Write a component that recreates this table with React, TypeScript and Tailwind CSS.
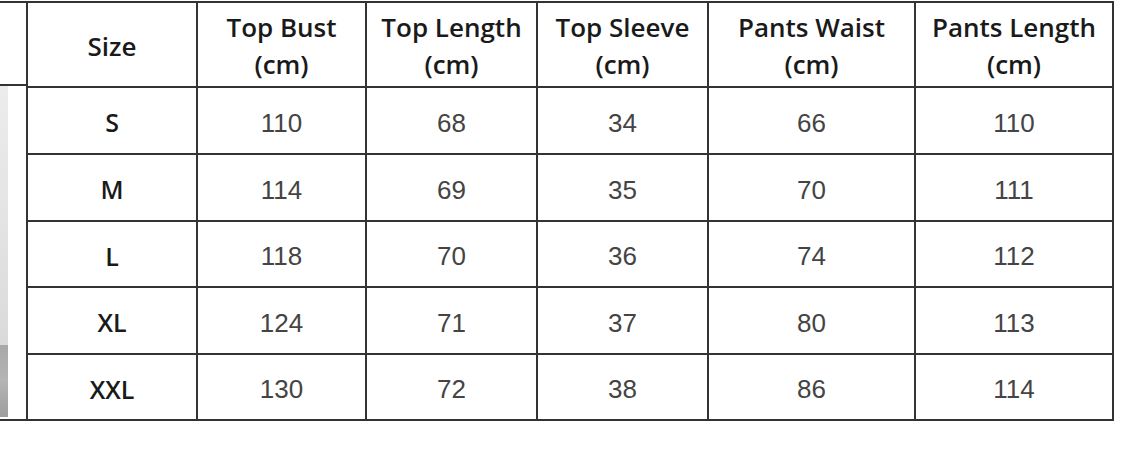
const headers = [
  { top: 'Size', bottom: '' },
  { top: 'Top Bust', bottom: '(cm)' },
  { top: 'Top Length', bottom: '(cm)' },
  { top: 'Top Sleeve', bottom: '(cm)' },
  { top: 'Pants Waist', bottom: '(cm)' },
  { top: 'Pants Length', bottom: '(cm)' },
];

const widths = ['w-[170px]', 'w-[169px]', 'w-[171px]', 'w-[171px]', 'w-[207px]', 'w-[198px]'];

const rows = [
  { h: 'h-[67px]', cells: ['S', '110', '68', '34', '66', '110'] },
  { h: 'h-[67px]', cells: ['M', '114', '69', '35', '70', '111'] },
  { h: 'h-[66px]', cells: ['L', '118', '70', '36', '74', '112'] },
  { h: 'h-[67px]', cells: ['XL', '124', '71', '37', '80', '113'] },
  { h: 'h-[66px]', cells: ['XXL', '130', '72', '38', '86', '114'] },
];

const headFont = "font-['Open_Sans',sans-serif]";
const dataFont = "font-['Liberation_Sans',sans-serif]";

const App = () => {
  return (
    <div className="w-[1139px] h-[452px] bg-white pt-[1px]">
      <div className="flex">
        {/* photo edge on the left */}
        <div className="flex flex-col w-[26px] border-t-2 border-b-2 border-[#333]">
          <div className="h-[83px] border-b-2 border-[#333]" />
          <div className="h-[331px] flex">
            <div className="w-[8px] flex flex-col">
              <div className="flex-1 bg-gradient-to-b from-[#ececec] via-[#e4e4e4] to-[#dadada]" />
              <div className="h-[72px] bg-gradient-to-b from-[#a8a8a8] via-[#b4b4b4] to-[#9e9e9e]" />
            </div>
          </div>
        </div>

        {/* size table */}
        <div className="flex flex-col border-t-2 border-l-2 border-[#333]">
          <div className="flex h-[85px] border-b-2 border-[#333]">
            {headers.map((hd, i) => (
              <div
                key={i}
                className={`${widths[i]} shrink-0 flex flex-col items-center justify-center pt-[3px] border-r-2 border-[#333] ${headFont} font-semibold text-[26px] leading-[37px] text-[#1a1a1a]`}
              >
                <span>{hd.top}</span>
                {hd.bottom && <span>{hd.bottom}</span>}
              </div>
            ))}
          </div>
          {rows.map((row, r) => (
            <div key={r} className={`flex ${row.h} border-b-2 border-[#333]`}>
              {row.cells.map((c, i) => (
                <div
                  key={i}
                  className={`${widths[i]} shrink-0 flex items-center justify-center pt-[5px] border-r-2 border-[#333] ${
                    i === 0
                      ? `${headFont} font-semibold text-[25px] text-[#1a1a1a]`
                      : `${dataFont} text-[26px] text-[#444]`
                  }`}
                >
                  {c}
                </div>
              ))}
            </div>
          ))}
        </div>
      </div>
    </div>
  );
};

export default App;
